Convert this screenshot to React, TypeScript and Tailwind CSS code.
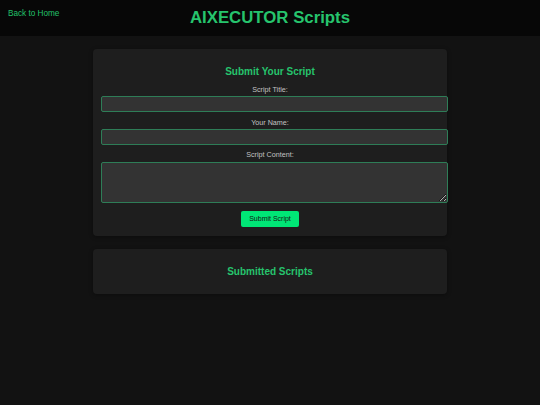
import React from "react";

export default function App() {
  return (
    <div
      className="min-h-screen bg-[#121212]"
      style={{ fontFamily: '"Liberation Sans", Arial, sans-serif' }}
    >
      <header className="relative flex h-[36px] items-center justify-center bg-[#070707]">
        <a className="absolute left-[8px] top-[8.5px] text-[8.2px] leading-[10px] text-[#22c06a]">
          Back to Home
        </a>
        <h1 className="text-[16.8px] font-bold leading-[20px] text-[#26c46d]">
          AIXECUTOR Scripts
        </h1>
      </header>

      <main className="flex flex-col items-center">
        <section className="mt-[13px] flex w-[354px] flex-col rounded-[4px] bg-[#1e1e1e] px-[8px] pb-[9px] pt-[17px] shadow-[0_1px_4px_rgba(0,0,0,0.35)]">
          <h2 className="text-center text-[10px] font-bold leading-[12px] text-[#26c46d]">
            Submit Your Script
          </h2>
          <label className="mt-[7px] block text-center text-[7.2px] leading-[10px] text-[#c2c2c2]">
            Script Title:
          </label>
          <input
            type="text"
            className="mt-[1px] block h-[16px] w-[347px] rounded-[2px] border border-[#2e7d57] bg-[#333333] px-[4px] text-[7px] text-[#dddddd] outline-none"
          />
          <label className="mt-[6px] block text-center text-[7.2px] leading-[10px] text-[#c2c2c2]">
            Your Name:
          </label>
          <input
            type="text"
            className="mt-[1px] block h-[16px] w-[347px] rounded-[2px] border border-[#2e7d57] bg-[#333333] px-[4px] text-[7px] text-[#dddddd] outline-none"
          />
          <label className="mt-[5px] block text-center text-[7.2px] leading-[10px] text-[#c2c2c2]">
            Script Content:
          </label>
          <textarea className="mt-[2px] block h-[41px] w-[347px] rounded-[2px] border border-[#2e7d57] bg-[#333333] px-[4px] text-[7px] text-[#dddddd] outline-none" />
          <div className="mt-[8px] flex justify-center">
            <button className="flex h-[16px] w-[58px] items-center justify-center rounded-[2px] bg-[#00e676] text-[7px] leading-[8px] text-[#141414]">
              Submit Script
            </button>
          </div>
        </section>

        <section className="mt-[13px] flex h-[45px] w-[354px] items-center justify-center rounded-[4px] bg-[#1e1e1e] shadow-[0_1px_4px_rgba(0,0,0,0.35)]">
          <h2 className="text-center text-[10px] font-bold leading-[12px] text-[#26c46d]">
            Submitted Scripts
          </h2>
        </section>
      </main>
    </div>
  );
}
